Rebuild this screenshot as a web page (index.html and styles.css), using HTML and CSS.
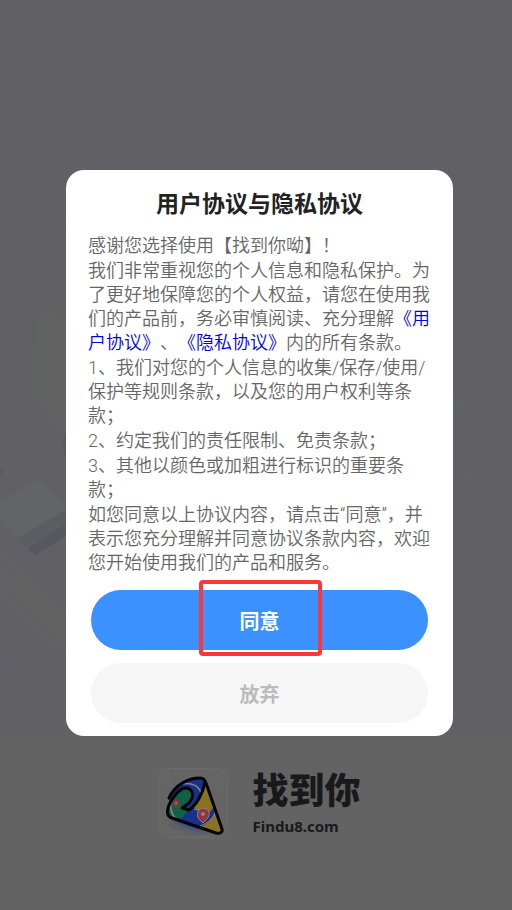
FILE: index.html
```html
<!DOCTYPE html>
<html lang="zh-CN">
<head>
  <meta charset="utf-8">
  <meta name="viewport" content="width=device-width, initial-scale=1">
  <title>用户协议与隐私协议</title>
  <link rel="stylesheet" href="styles.css">
</head>
<body class="page">
<svg class="backdrop" viewBox="0 0 512 910" preserveAspectRatio="xMidYMid slice" aria-hidden="true">
  <defs>
    <linearGradient id="edge" x1="0" y1="0" x2="1" y2="0">
      <stop offset="0" stop-color="#606064"/>
      <stop offset="1" stop-color="#636465"/>
    </linearGradient>
    <filter id="soft"><feGaussianBlur stdDeviation="4"/></filter>
  </defs>
  <g filter="url(#soft)">
    <path d="M0 268L70 225V420L0 350z" fill="#606064"/>
    <path d="M0 385L45 310L90 330V445L60 430z" fill="url(#edge)"/>
    <path d="M0 550L30 580L70 620V660L0 590z" fill="#626264"/>
    <path d="M13 667L33 650L28 658L18 673z" fill="#5e5e62"/>
    <path d="M440 390L464 400V480L440 485z" fill="#616265"/>
  </g>
  <path d="M-10 506L38 480L70 510L18 538z" fill="#636466"/>
  <path d="M18 538L70 507V521L28 549z" fill="#5c5d63"/>
  <path d="M28 549L70 521V533L35 556z" fill="#57585f"/>
  <path d="M63 436L70 432V462L64 455z" fill="#5a5b61"/>
  <path d="M0 467L4 471L0 476z" fill="#5a5b61"/>
</svg>
<main class="dialog" role="dialog" aria-modal="true" aria-labelledby="title">
  <h1 class="title" id="title">用户协议与隐私协议</h1>
  <div class="terms">
    <p>感谢您选择使用【找到你呦】！</p>
    <p>我们非常重视您的个人信息和隐私保护。为了更好地保障您的个人权益，请您在使用我们的产品前，务必审慎阅读、充分理解<a href="#user">《用户协议》</a>、<a href="#privacy">《隐私协议》</a>内的所有条款。</p>
    <p>1、我们对您的个人信息的收集/保存/使用/保护等规则条款，以及您的用户权利等条款；</p>
    <p>2、约定我们的责任限制、免责条款；</p>
    <p>3、其他以颜色或加粗进行标识的重要条款；</p>
    <p>如您同意以上协议内容，请点击“同意”，并表示您充分理解并同意协议条款内容，欢迎您开始使用我们的产品和服务。</p>
  </div>
  <div class="actions">
    <button type="button" class="button agree">同意<span class="marker"></span></button>
    <button type="button" class="button quit">放弃</button>
  </div>
</main>
<footer class="brand">
  <svg class="logo" viewBox="0 0 70 70" aria-hidden="true">
    <defs>
      <clipPath id="cone"><path d="M10 30C17 17 30 10 42 10C45 10 47 12 48 15L64 61C65 64 62 66 58 65L14 50C9 49 8 43 12 35z"/></clipPath>
      <filter id="glow"><feGaussianBlur stdDeviation="3"/></filter>
    </defs>
    <rect x=".5" y=".5" width="69" height="69" rx="12" fill="#656565" stroke="#6b6b6b"/>
    <path d="M4 20L20 30L14 2M28 2L38 14L60 4M50 22L68 34M4 54L26 62L30 68" fill="none" stroke="#606060"/>
    <path d="M12 52L50 65L35 50z" fill="#29378a" filter="url(#glow)"/>
    <g clip-path="url(#cone)">
      <path d="M0 0H70V70H0z" fill="#17318c"/>
      <path d="M47 13L70 60L64 70L40 60C50 56 55 51 57 41L46 48L36 40L44 26z" fill="#8b7122"/>
      <path d="M56 38C53 46 47 45 45 45L36 40L30 42L26 48L42 57C52 54 57 49 58 40z" fill="#17318c"/>
      <path d="M36 41L46 44M58 41C56 50 50 55 42 58" fill="none" stroke="#85878b"/>
      <path d="M24 16C34 14 41 18 43 25" fill="none" stroke="#85878b" stroke-width="1.5"/>
      <path d="M8 38C15 26 22 19 28 20C36 21 36 30 30 36L24 40L31 42L24 50H8z" fill="#126046"/>
      <path d="M13 33C12 40 13 45 17 50" fill="none" stroke="#85878b" stroke-width="1.5"/>
    </g>
    <path d="M11 30C17 17 30 10 42 10C45 10 47 12 48 15L64 61C65 64 62 66 58 65L14 50C9 49 8 43 12 35C17 26 23 19 29 20C36 22 36 29 31 35L24 40L31 42C38 37 45 26 47 14" fill="none" stroke="#050505" stroke-width="3" stroke-linejoin="round" stroke-linecap="round"/>
    <path d="M45 55C39 50 39 48 40 44C41 39 49 39 51 44C52 48 50 50 45 55z" fill="#963336" stroke="#88888b"/>
    <circle cx="45" cy="46" r="2" fill="#878787"/>
    <path d="M18 40C13 36 14 32 18 32C22 32 22 36 18 40z" fill="#963336"/>
    <circle cx="18" cy="35" r="1" fill="#878787"/>
  </svg>
  <div class="brand-text">
    <div class="brand-name">找到你</div>
    <div class="brand-site">Findu8.com</div>
  </div>
</footer>
</body>
</html>
```

FILE: styles.css
```css
* { box-sizing:border-box; }
.page { margin:0; padding:170px 59px 0 66px; min-height:100vh; position:relative; background:linear-gradient(#616065 0, #616065 81%, #636363 82%, #636363 100%); font-family:Roboto,"Noto Sans CJK SC",sans-serif; }
.backdrop { position:absolute; top:0; left:0; width:100%; height:100%; }

.dialog { position:relative; padding:20px 22px 13px; background:#FFFFFF; border-radius:18px; }
.title { margin:0 0 14px; font-size:23px; line-height:30px; font-weight:bold; text-align:center; color:#222222; }
.terms { font-size:18px; line-height:24px; font-weight:350; color:#666666; text-spacing-trim:space-all; }
.terms p { margin:0 0 1px; }
.terms a { color:#0000EE; text-decoration:none; }

.actions { display:flex; flex-direction:column; gap:13px; margin:15px 3px 0; }
.button { position:relative; height:60px; padding:0; border:0; border-radius:30px; font-family:inherit; font-size:20px; font-weight:bold; }
.agree { background:#3B91FF; color:#FFFFFF; }
.quit { background:#F6F6F6; color:#BBBBBB; }
.marker { position:absolute; top:-10px; left:50%; width:123px; height:76px; margin-left:-61px; border:4px solid #FB373C; border-radius:4px; }

.brand { position:relative; display:flex; justify-content:center; gap:24px; margin-top:32px; color:#19191B; }
.logo { width:70px; height:70px; }
.brand-name { font-size:36px; line-height:48px; font-weight:900; }
.brand-site { font-family:"Noto Sans",sans-serif; font-size:15px; line-height:20px; font-weight:bold; }
```
